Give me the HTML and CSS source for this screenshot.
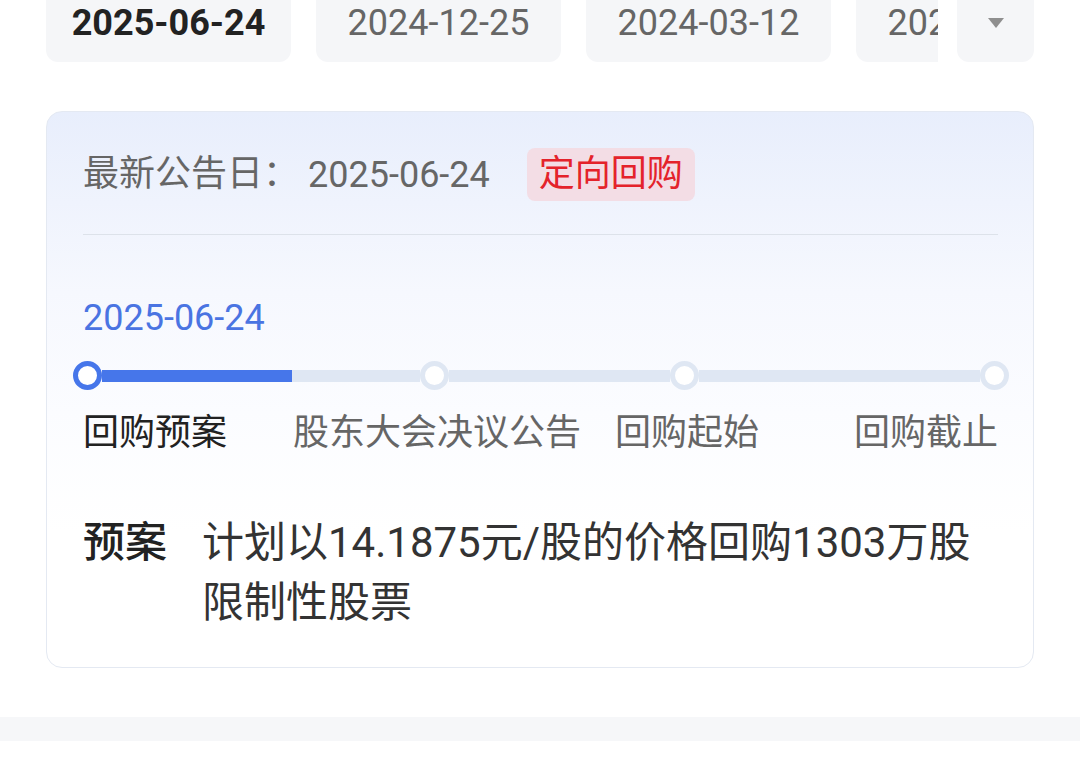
FILE: index.html
```html
<!DOCTYPE html>
<html lang="zh-CN">
<head>
  <meta charset="utf-8">
  <title>回购进度</title>
  <link rel="stylesheet" href="styles.css">
</head>
<body>
  <div class="page">
    <div class="tab-bar">
      <div class="tab-scroll">
        <div class="tab active">2025-06-24</div>
        <div class="tab">2024-12-25</div>
        <div class="tab">2024-03-12</div>
        <div class="tab">2023-09-08</div>
      </div>
      <div class="tab-more">
        <svg width="18" height="12" viewBox="0 0 18 12"><path d="M1 1h16l-8 10z" fill="#8f8f8f"/></svg>
      </div>
    </div>

    <div class="card">
      <div class="card-head">
        <span class="head-label">最新公告日：</span>
        <span class="head-date">2025-06-24</span>
        <span class="badge">定向回购</span>
      </div>

      <div class="step-date">2025-06-24</div>

      <div class="track">
        <span class="dot done"></span>
        <span class="seg" style="flex-grow: 319"><span class="seg-fill" style="width: 59.6%"></span></span>
        <span class="dot"></span>
        <span class="seg" style="flex-grow: 221"></span>
        <span class="dot"></span>
        <span class="seg" style="flex-grow: 282"></span>
        <span class="dot"></span>
      </div>

      <div class="steps">
        <span class="step current">回购预案</span>
        <span class="step step-2">股东大会决议公告</span>
        <span class="step step-3">回购起始</span>
        <span class="step step-4">回购截止</span>
      </div>

      <div class="plan">
        <div class="plan-label">预案</div>
        <div class="plan-text">计划以14.1875元/股的价格回购1303万股限制性股票</div>
      </div>
    </div>
  </div>
  <div class="band"></div>
</body>
</html>
```

FILE: styles.css
```css
body {
  margin: 0;
  background: #fff;
  font-family: Roboto, "Noto Sans CJK SC", sans-serif;
  font-size: 36px;
  color: #333;
  overflow: hidden;
}

.page {
  padding: 0 46px;
}

/* date tabs */
.tab-bar {
  display: flex;
  height: 78px;
  margin-top: -16px;
}

.tab-scroll {
  flex: 1;
  display: flex;
  gap: 25px;
  overflow: hidden;
}

.tab {
  flex: 0 0 245px;
  display: flex;
  align-items: center;
  justify-content: center;
  background: #f5f6f8;
  border-radius: 12px;
  color: #666;
  white-space: nowrap;
}

.tab.active {
  color: #222;
  font-weight: bold;
}

.tab-more {
  flex: 0 0 77px;
  margin-left: 19px;
  display: flex;
  align-items: center;
  justify-content: center;
  background: #f5f6f8;
  border-radius: 12px;
}

/* card */
.card {
  margin-top: 49px;
  padding: 36px 35px 34px 36px;
  border: 1px solid #e4e9f2;
  border-radius: 16px;
  background: linear-gradient(180deg, #e8eefc 0, #f6f8fe 180px, #fbfcff 300px, #fff 420px);
}

.card-head {
  display: flex;
  align-items: center;
  padding-bottom: 33px;
  border-bottom: 1px solid #dde2ea;
  color: #666;
}

.head-label {
  line-height: 53px;
}

.head-date {
  margin-left: 9px;
}

.badge {
  margin-left: 37px;
  padding: 0 12px;
  line-height: 53px;
  border-radius: 8px;
  background: #f3dde5;
  color: #e4232b;
}

.step-date {
  margin-top: 58px;
  line-height: 50px;
  color: #4a74e2;
}

.track {
  display: flex;
  align-items: center;
  margin: 18px -11px 0 -10px;
}

.dot {
  flex: 0 0 29px;
  height: 29px;
  box-sizing: border-box;
  border: 5px solid #dfe7f3;
  border-radius: 50%;
  background: #fff;
}

.dot.done {
  border-color: #4676ea;
}

.seg {
  flex-basis: 0;
  height: 12px;
  background: #dfe7f3;
}

.seg-fill {
  display: block;
  height: 100%;
  background: #4676ea;
}

.steps {
  display: flex;
  margin-top: 18px;
  line-height: 50px;
  color: #666;
}

.step.current {
  color: #222;
}

.step-2 {
  margin-left: 66px;
}

.step-3 {
  margin-left: 34px;
}

.step-4 {
  margin-left: auto;
}

.plan {
  display: flex;
  margin-top: 55px;
  font-size: 42px;
  line-height: 60px;
}

.plan-label {
  flex: 0 0 119px;
  color: #222;
  font-weight: 500;
}

.plan-text {
  flex: 1;
  color: #333;
}

.band {
  height: 24px;
  margin-top: 49px;
  background: #f6f7f9;
}
```
